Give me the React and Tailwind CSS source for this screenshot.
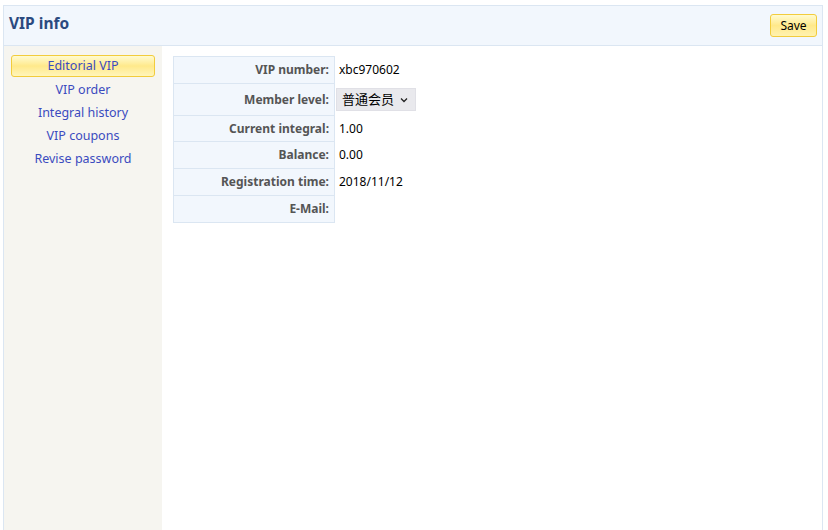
import React from "react";

const rows = [
  { label: "VIP number:", value: "xbc970602", h: "h-[27px]" },
  { label: "Member level:", select: true, h: "h-[32px]" },
  { label: "Current integral:", value: "1.00", h: "h-[26px]" },
  { label: "Balance:", value: "0.00", h: "h-[27px]" },
  { label: "Registration time:", value: "2018/11/12", h: "h-[27px]" },
  { label: "E-Mail:", value: "", h: "h-[27px]" },
];

const links = ["VIP order", "Integral history", "VIP coupons", "Revise password"];

export default function App() {
  return (
    <div
      className="w-[828px] h-[530px] bg-white overflow-hidden"
      style={{ fontFamily: '"Noto Sans", "Noto Sans CJK SC", sans-serif' }}
    >
      <div className="ml-[3px] mt-[5px] w-[820px] h-[525px] border border-b-0 border-[#dbe6f2] flex flex-col">
        <div className="h-[40px] bg-[#f2f7fd] border-b border-[#dbe6f2] flex items-center justify-between pl-[5px] pr-[5px]">
          <div className="text-[15.5px] font-bold text-[#2b4a7f] leading-none -mt-[3px]">VIP info</div>
          <button className="w-[47px] h-[23px] rounded-[3px] border border-[#f2cc3c] bg-gradient-to-b from-[#fffbd0] via-[#ffe98a] to-[#fff2b0] text-[12px] text-black leading-none">
            Save
          </button>
        </div>
        <div className="flex flex-1">
          <div className="w-[158px] bg-[#f6f5f0] pt-[9px] px-[7px]">
            <div className="h-[22px] rounded-[3px] border border-[#f2cc3c] bg-gradient-to-b from-[#fffbd0] via-[#ffe98a] to-[#fff5bb] flex items-center justify-center text-[12.5px] text-[#3b4bbf] leading-none">
              Editorial VIP
            </div>
            <div className="flex flex-col mt-[2px]">
              {links.map((l) => (
                <div
                  key={l}
                  className="h-[23px] flex items-center justify-center text-[12.5px] text-[#3b4bbf] leading-none"
                >
                  {l}
                </div>
              ))}
            </div>
          </div>
          <div className="flex-1 pl-[11px] pt-[10px]">
            <table className="border-collapse">
              <tbody>
                {rows.map((r) => (
                  <tr key={r.label} className={r.h}>
                    <td className="w-[161px] bg-[#f2f7fd] border border-[#dbe6f2] text-right pr-[5px] text-[12px] font-bold text-[#555555] align-middle">
                      {r.label}
                    </td>
                    <td className="pl-[1px] text-[12px] text-black align-middle">
                      {r.select ? (
                        <div className="w-[80px] h-[23px] bg-[#e9e9ed] border border-[#e0e0e6] flex items-center pl-[5px] gap-[6px]">
                          <span className="text-[13px] leading-none">普通会员</span>
                          <svg width="8" height="6" viewBox="0 0 8 6" className="mt-[1px]">
                            <path d="M1 1.5 L4 4.5 L7 1.5" fill="none" stroke="#222" strokeWidth="1.3" />
                          </svg>
                        </div>
                      ) : (
                        <span className="pl-[3px]">{r.value}</span>
                      )}
                    </td>
                  </tr>
                ))}
              </tbody>
            </table>
          </div>
        </div>
      </div>
    </div>
  );
}
